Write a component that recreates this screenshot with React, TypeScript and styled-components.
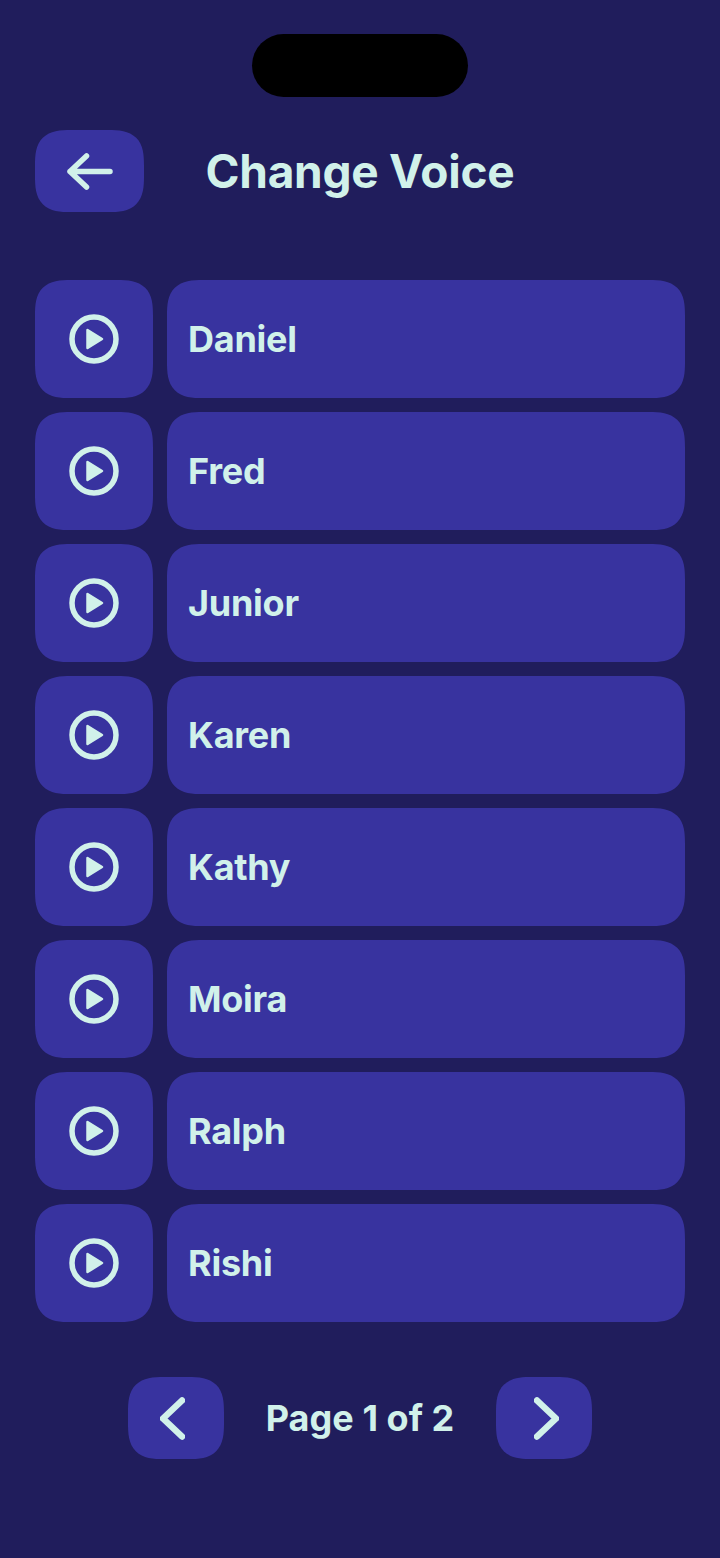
import styled, { createGlobalStyle, css } from "styled-components";

const VOICES = ["Daniel", "Fred", "Junior", "Karen", "Kathy", "Moira", "Ralph", "Rishi"];

const GlobalStyle = createGlobalStyle`
  html, body {
    margin: 0;
    background: #201d5c;
  }
  button {
    border: 0;
    padding: 0;
    font: inherit;
    color: inherit;
  }
`;

const tile = css`
  border-radius: 28px;
  background: #38339f;

  @supports (corner-shape: squircle) {
    border-radius: 36px;
    corner-shape: superellipse(1.5);
  }
`;

const Screen = styled.div`
  width: 720px;
  height: 1558px;
  box-sizing: border-box;
  padding: 34px 35px 0;
  background: #201d5c;
  color: #d1f1ea;
  font-family: Inter, "Liberation Sans", sans-serif;
  display: flex;
  flex-direction: column;
  overflow: hidden;
`;

const Island = styled.div`
  width: 216px;
  height: 63px;
  flex: none;
  align-self: center;
  border-radius: 32px;
  background: #000;
`;

const Header = styled.header`
  margin-top: 33px;
  display: grid;
  grid-template-columns: 109px 1fr 109px;
  align-items: center;
`;

const Title = styled.h1`
  margin: 0;
  text-align: center;
  font-size: 46px;
  font-weight: 700;
  letter-spacing: -0.25px;
  line-height: 82px;
`;

const IconButton = styled.button<{ $width: number }>`
  ${tile}
  width: ${({ $width }) => $width}px;
  height: 82px;
  display: flex;
  align-items: center;
  justify-content: center;
`;

const VoiceList = styled.div`
  margin-top: 68px;
  display: flex;
  flex-direction: column;
  gap: 14px;
`;

const VoiceRow = styled.div`
  display: flex;
  gap: 14px;
`;

const PlayButton = styled.button`
  ${tile}
  width: 118px;
  height: 118px;
  flex: none;
  display: flex;
  align-items: center;
  justify-content: center;
`;

const VoiceName = styled.button`
  ${tile}
  flex: 1;
  height: 118px;
  box-sizing: border-box;
  padding-left: 21px;
  text-align: left;
  font-size: 36px;
  font-weight: 700;
  letter-spacing: -0.25px;
`;

const Pager = styled.nav`
  margin-top: 55px;
  display: flex;
  justify-content: center;
  align-items: center;
`;

const PageLabel = styled.span`
  width: 272px;
  text-align: center;
  font-size: 36px;
  font-weight: 700;
  letter-spacing: 0.05px;
`;

const Icon = styled.svg`
  display: block;
  fill: none;
  stroke: #d1f1ea;
  stroke-linecap: round;
  stroke-linejoin: round;
`;

const Chevron = styled(Icon)<{ $flip?: boolean }>`
  margin: ${({ $flip }) => ($flip ? "0 0 0 5px" : "0 7px 0 0")};
`;

const BackIcon = () => (
  <Icon width="46" height="37" viewBox="0 0 46 37" strokeWidth="5.5">
    <path d="M43 18.5H3M19.5 3 3 18.5 19.5 34" />
  </Icon>
);

const PlayIcon = () => (
  <Icon width="50" height="50" viewBox="0 0 50 50" strokeWidth="5.5">
    <circle cx="25" cy="25" r="22" />
    <path d="M18.5 16v18L33 25z" fill="#d1f1ea" strokeWidth="2.5" />
  </Icon>
);

const ChevronIcon = ({ flip }: { flip?: boolean }) => (
  <Chevron $flip={flip} width="25" height="43" viewBox="0 0 25 43" strokeWidth="6.5">
    <path d={flip ? "M3 3.5l19 18-19 18" : "M22 3.5l-19 18 19 18"} />
  </Chevron>
);

const App = () => (
  <>
    <GlobalStyle />
    <Screen>
      <Island />
      <Header>
        <IconButton $width={109}>
          <BackIcon />
        </IconButton>
        <Title>Change Voice</Title>
      </Header>
      <VoiceList>
        {VOICES.map((name) => (
          <VoiceRow key={name}>
            <PlayButton>
              <PlayIcon />
            </PlayButton>
            <VoiceName>{name}</VoiceName>
          </VoiceRow>
        ))}
      </VoiceList>
      <Pager>
        <IconButton $width={96}>
          <ChevronIcon />
        </IconButton>
        <PageLabel>Page 1 of 2</PageLabel>
        <IconButton $width={96}>
          <ChevronIcon flip />
        </IconButton>
      </Pager>
    </Screen>
  </>
);

export default App;
